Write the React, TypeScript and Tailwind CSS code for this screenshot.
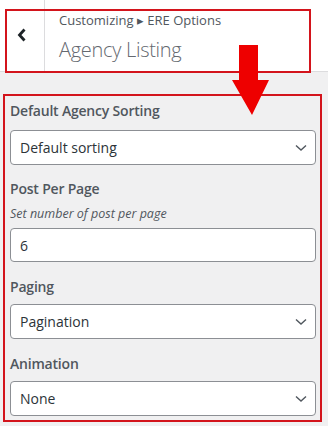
import React from "react";

const font = { fontFamily: '"Open Sans", "Noto Sans", Arial, sans-serif' };

function Chevron() {
  return (
    <svg width="12" height="8" viewBox="0 0 12 8" className="absolute right-[8px] top-1/2 -translate-y-1/2">
      <path d="M1 1.5 L6 6 L11 1.5" fill="none" stroke="#50575e" strokeWidth="1.4" />
    </svg>
  );
}

function Select({ value }: { value: string }) {
  return (
    <div className="relative h-[35px] rounded-[4px] border border-[#8c8f94] bg-white flex items-center pl-[9px] text-[14px] text-[#2c3338]">
      {value}
      <Chevron />
    </div>
  );
}

function Label({ children, className = "" }: { children: React.ReactNode; className?: string }) {
  return (
    <div className={"text-[14px] leading-[20px] font-semibold tracking-[-0.2px] text-[#50575e] " + className}>{children}</div>
  );
}

export default function App() {
  return (
    <div className="relative w-[328px] h-[426px] bg-[#f0f0f1] overflow-hidden" style={font}>
      <div className="h-[72px] bg-white border-b border-[#dcdcde] flex">
        <div className="w-[45px] border-r border-[#dcdcde] flex items-center justify-center">
          <svg width="10" height="14" viewBox="0 0 10 14" className="ml-[-1px] mt-[-2px]">
            <path d="M7.5 1.5 L2.5 7 L7.5 12.5" fill="none" stroke="#1d2327" strokeWidth="2.8" />
          </svg>
        </div>
        <div className="pl-[14px] pt-[10px]">
          <div className="text-[13px] leading-[20px] text-[#50575e]">Customizing ▸ ERE Options</div>
          <div className="text-[20px] leading-[28px] font-light tracking-[-0.3px] text-[#646970] mt-[6px]">Agency Listing</div>
        </div>
      </div>

      <div className="mt-[22px] ml-[3px] mr-[6px] border-2 border-[#d3141c] pl-[5px] pr-[4px] pt-[5px] pb-[4px]">
        <Label>Default Agency Sorting</Label>
        <div className="mt-[9px]">
          <Select value="Default sorting" />
        </div>
        <Label className="mt-[14px]">Post Per Page</Label>
        <div className="text-[12.5px] leading-[18px] italic text-[#50575e] mt-[6px]">Set number of post per page</div>
        <div className="mt-[5px] h-[34px] rounded-[4px] border border-[#8c8f94] bg-white flex items-center pl-[9px] text-[14px] text-[#2c3338]">
          6
        </div>
        <Label className="mt-[15px]">Paging</Label>
        <div className="mt-[7px]">
          <Select value="Pagination" />
        </div>
        <Label className="mt-[15px]">Animation</Label>
        <div className="mt-[7px]">
          <Select value="None" />
        </div>
      </div>

      {/* annotation: header box */}
      <div className="absolute left-[5px] top-[9px] w-[306px] h-[64px] border-2 border-[#d3141c] pointer-events-none" />

      {/* annotation: arrow */}
      <svg width="40" height="75" viewBox="0 0 40 75" className="absolute left-[232px] top-[44px]">
        <polygon points="7,1 26,1 26,36 37,36 20,71 0,36 7,36" fill="#ee0000" />
      </svg>
    </div>
  );
}
